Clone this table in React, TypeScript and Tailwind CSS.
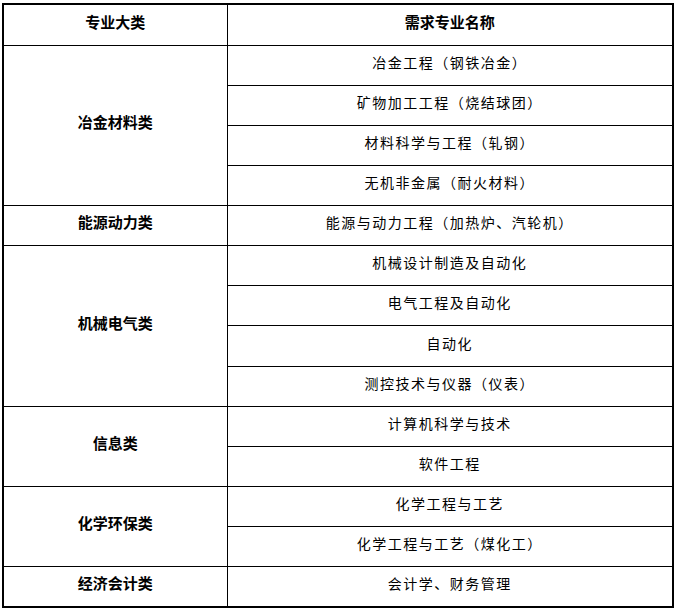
import React from "react";

type Group = { category: string; majors: string[] };

const groups: Group[] = [
  {
    category: "冶金材料类",
    majors: ["冶金工程（钢铁冶金）", "矿物加工工程（烧结球团）", "材料科学与工程（轧钢）", "无机非金属（耐火材料）"],
  },
  { category: "能源动力类", majors: ["能源与动力工程（加热炉、汽轮机）"] },
  {
    category: "机械电气类",
    majors: ["机械设计制造及自动化", "电气工程及自动化", "自动化", "测控技术与仪器（仪表）"],
  },
  { category: "信息类", majors: ["计算机科学与技术", "软件工程"] },
  { category: "化学环保类", majors: ["化学工程与工艺", "化学工程与工艺（煤化工）"] },
  { category: "经济会计类", majors: ["会计学、财务管理"] },
];

const font = { fontFamily: '"Noto Sans CJK SC", "Noto Sans", sans-serif' };

export default function App() {
  return (
    <div className="w-[681px] h-[615px] bg-white pl-[2px] pt-[3px]" style={font}>
      <table className="w-[672px] border-collapse border-2 border-black text-black">
        <thead>
          <tr className="h-[41px]">
            <th className="w-[224px] border border-black pb-[6px] text-[15px] font-bold">专业大类</th>
            <th className="border border-black pb-[6px] text-[15px] font-bold">需求专业名称</th>
          </tr>
        </thead>
        <tbody>
          {groups.map((g) =>
            g.majors.map((m, i) => (
              <tr key={g.category + m} className="h-[40.15px]">
                {i === 0 && (
                  <td
                    rowSpan={g.majors.length}
                    className="border border-black pb-[6px] text-center text-[15px] font-bold"
                  >
                    {g.category}
                  </td>
                )}
                <td className="border border-black pb-[6px] text-center text-[14px] tracking-[1.5px]">{m}</td>
              </tr>
            ))
          )}
        </tbody>
      </table>
    </div>
  );
}
